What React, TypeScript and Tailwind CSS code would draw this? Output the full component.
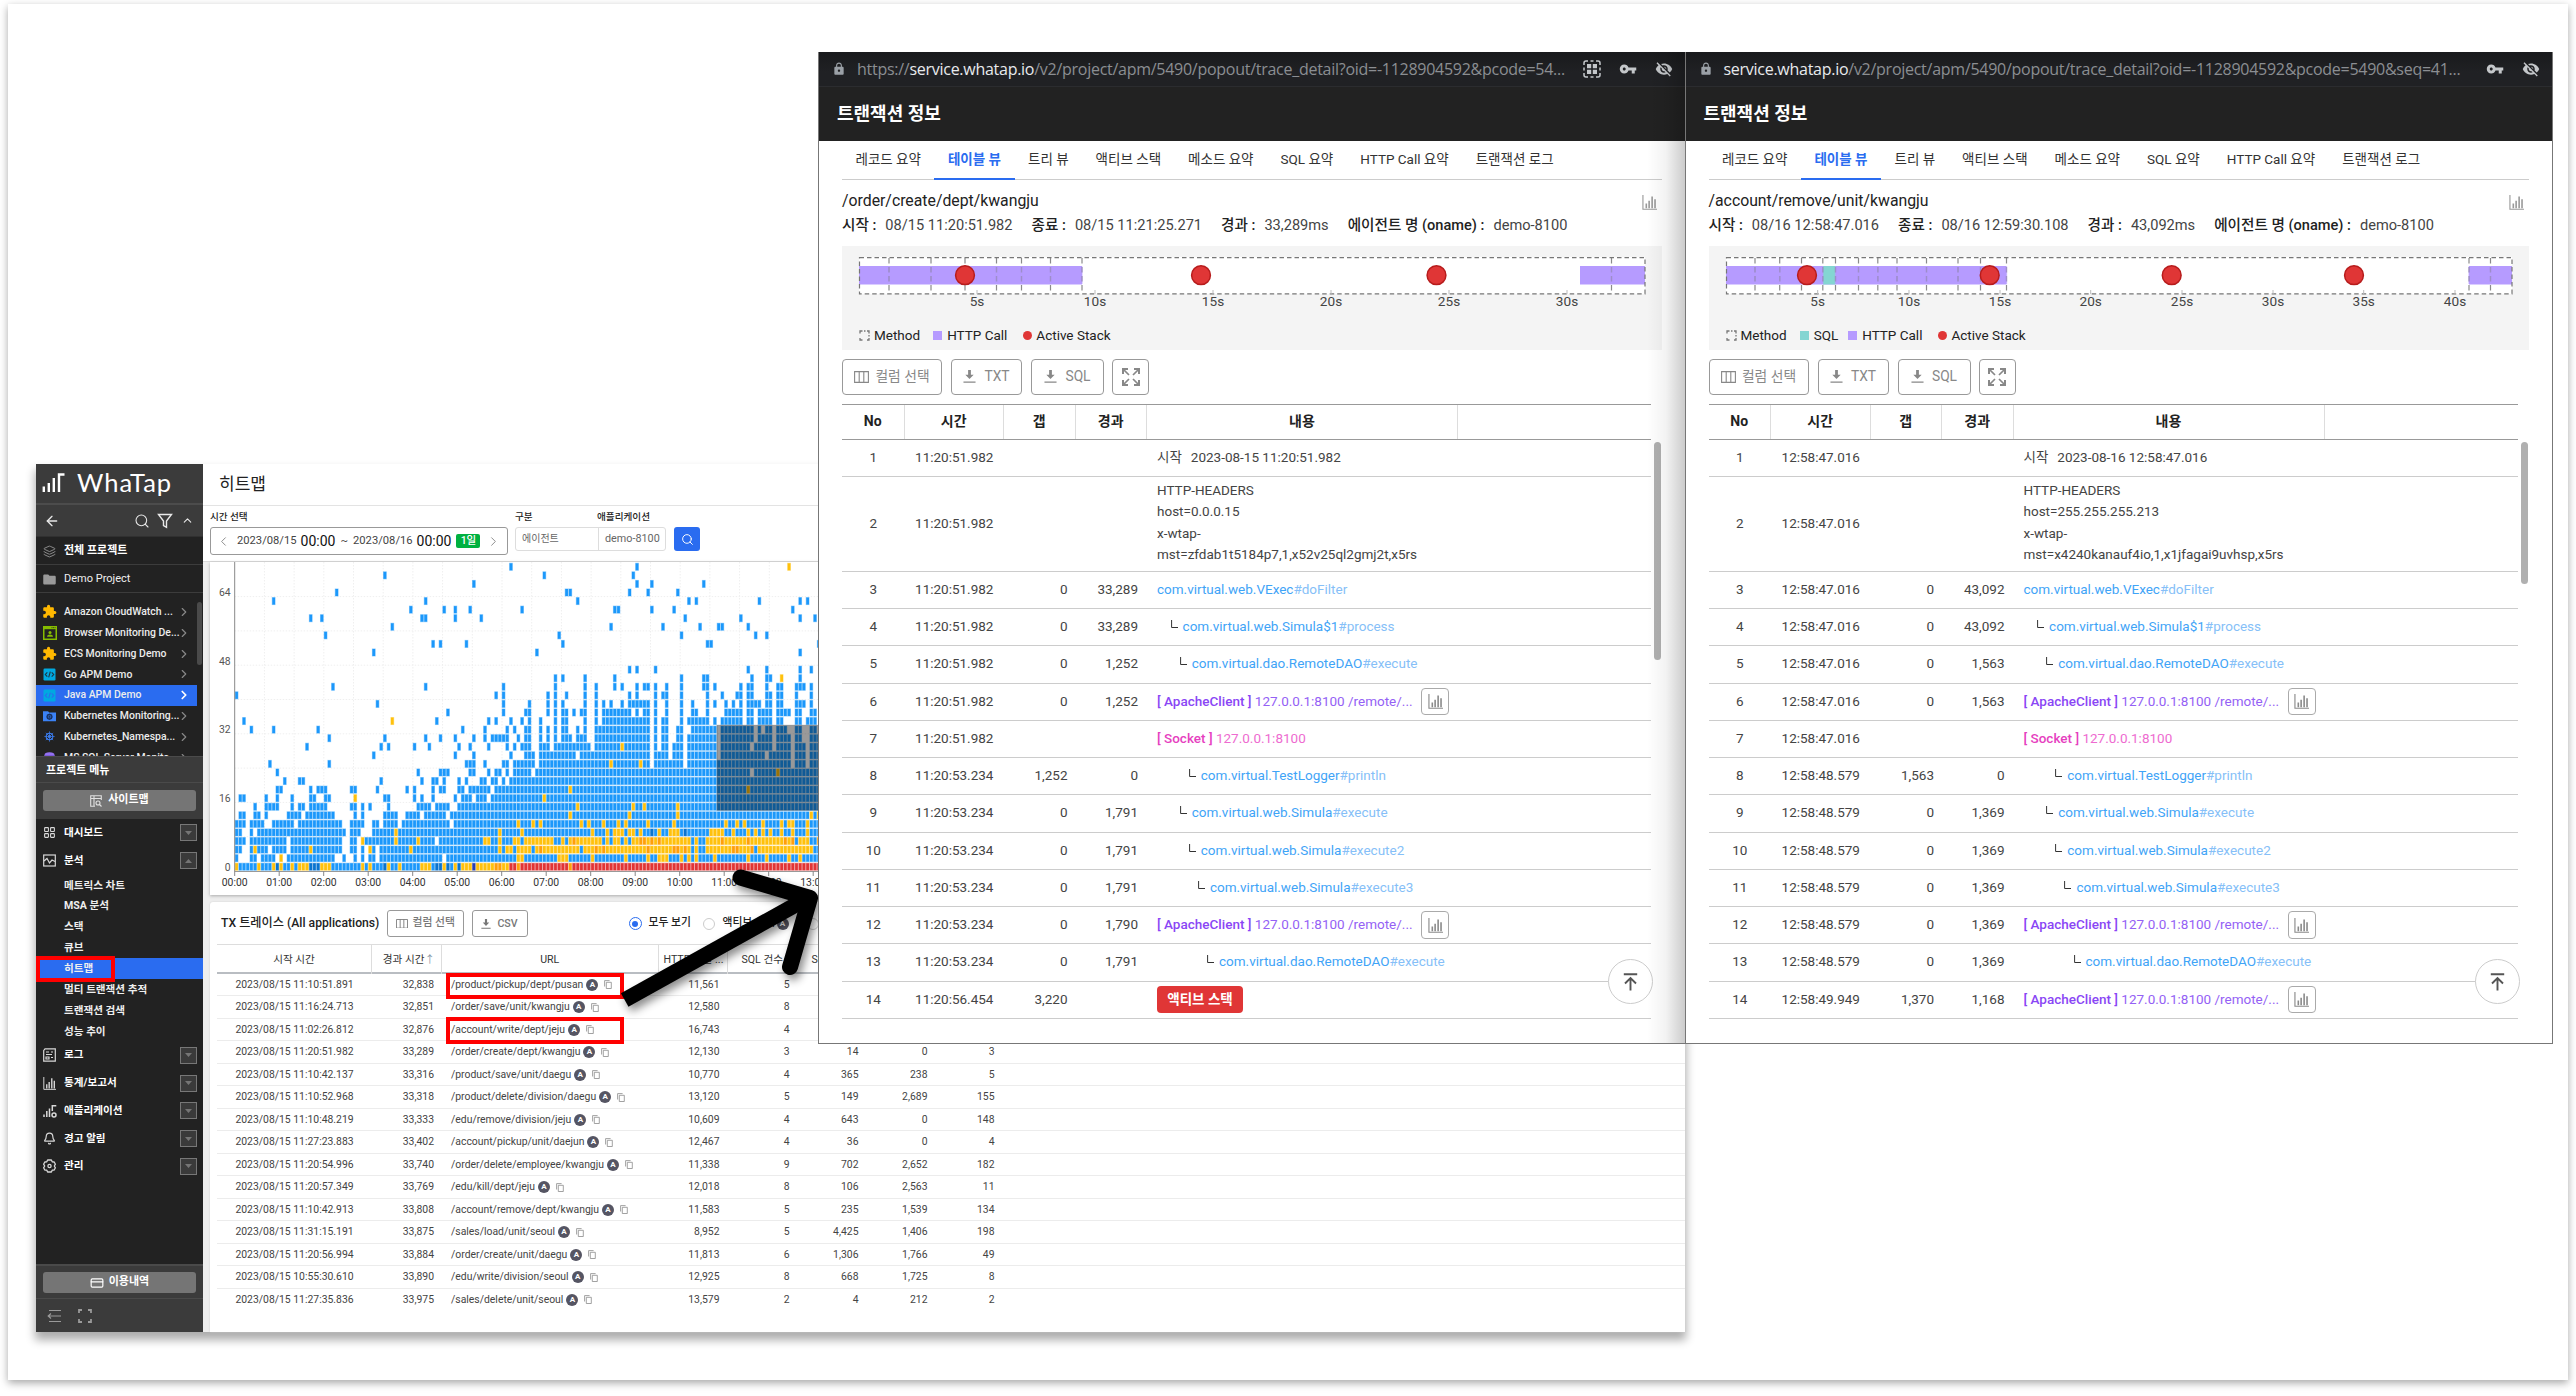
import type { ReactNode } from "react";
import { MdLock, MdVpnKey, MdVisibilityOff, MdFolder, MdExtension } from "react-icons/md";
import {
  ArrowLeft,
  Search,
  ChevronUp,
  ChevronLeft,
  ChevronRight,
  Layers,
  LayoutGrid,
  Bell,
  CreditCard,
} from "lucide-react";

/* ---------- shared icons ---------- */

function BarsIcon({ size, className = "" }: { size: number; className?: string }) {
  return (
    <svg width={size} height={size} viewBox="0 0 16 16" className={className} fill="none" stroke="currentColor">
      <path d="M1 0v15.2h15" strokeWidth="1.2" />
      <path d="M4.6 9v5M7.6 6v8M10.8 1.5v12.5M13.9 4.5V14" strokeWidth="1.7" />
    </svg>
  );
}

function ColumnsIcon({ w, className = "" }: { w: number; className?: string }) {
  return (
    <svg width={w} height={w * 0.8} viewBox="0 0 15 12" className={className} fill="none" stroke="currentColor" strokeWidth="1.1">
      <path d="M.6 .6h13.8v10.8H.6zM5.2 .6v10.8M9.8 .6v10.8" />
    </svg>
  );
}

function DownloadIcon({ size }: { size: number }) {
  return (
    <svg width={size} height={size} viewBox="0 0 13 14" fill="currentColor">
      <path d="M5 0h3v5h3L6.500 9.800 2 5h3zM0 12.400h13v1.300H0z" />
    </svg>
  );
}

function ExpandIcon() {
  return (
    <svg width="18" height="18" viewBox="0 0 18 18" fill="none" stroke="currentColor" strokeWidth="2">
      <path d="M1 6V1h5M12 1h5v5M17 12v5h-5M6 17H1v-5" />
      <path d="M1 1l6 6M17 1l-6 6M17 17l-6-6M1 17l6-6" strokeWidth="1.700" />
    </svg>
  );
}

function CopyIcon() {
  return (
    <svg width="8" height="9" viewBox="0 0 8 9" fill="none" stroke="#8a8a8a" strokeWidth="0.8">
      <path d="M2.300 2.300h5v6.200h-5zM.6 6.500V.6h5" />
    </svg>
  );
}

function AppTile({ faded }: { faded?: boolean }) {
  return (
    <svg width="13" height="13" viewBox="0 0 13 13">
      <rect x=".5" y=".5" width="12" height="12" rx="1.200" fill="#00a9e0" />
      <path
        d="M4.300 4.300L2.300 6.500l2 2.200M8.700 4.300l2 2.200-2 2.200M7.300 3.600L5.700 9.400"
        stroke={faded ? "#2b6cf0" : "#1d3440"}
        strokeWidth="1.100"
        fill="none"
      />
    </svg>
  );
}

function Helm({ color, size }: { color: string; size: number }) {
  return (
    <svg width={size} height={size} viewBox="0 0 12 12" fill="none" stroke={color}>
      <circle cx="6" cy="6" r="3.600" strokeWidth="1.200" />
      <circle cx="6" cy="6" r="1" fill={color} />
      <path d="M6 .4v11.200M.4 6h11.200M2 2l8 8M10 2l-8 8" strokeWidth=".8" />
    </svg>
  );
}

/* ---------- sidebar ---------- */

const projects: { name: string; icon: ReactNode; active?: boolean }[] = [
  { name: "Amazon CloudWatch ...", icon: <MdExtension size={15} color="#ffb800" /> },
  {
    name: "Browser Monitoring De...",
    icon: (
      <svg width="14" height="14" viewBox="0 0 14 14">
        <rect width="14" height="14" fill="#86bc00" />
        <rect x="1.500" y="3.200" width="11" height="9.300" fill="#222" />
        <circle cx="7" cy="6.500" r="1.500" fill="#86bc00" />
        <path d="M4 10.800c0-3 6-3 6 0z" fill="#86bc00" />
        <path d="M8.500 1.600h4" stroke="#222" strokeWidth=".8" strokeDasharray="1 .6" />
      </svg>
    ),
  },
  { name: "ECS Monitoring Demo", icon: <MdExtension size={15} color="#ffb800" /> },
  { name: "Go APM Demo", icon: <AppTile /> },
  { name: "Java APM Demo", icon: <AppTile faded />, active: true },
  {
    name: "Kubernetes Monitoring...",
    icon: (
      <svg width="13" height="12" viewBox="0 0 13 12">
        <path d="M0 1.200h5l1.200 1.400H13v8.600H0z" fill="#3b82f6" />
        <circle cx="6.500" cy="6.800" r="2.400" fill="none" stroke="#17305e" strokeWidth="1.200" />
        <path d="M6.500 3.600v6.400M3.400 6.800h6.200M4.300 4.600l4.400 4.400M8.700 4.600L4.300 9" stroke="#17305e" strokeWidth=".6" />
      </svg>
    ),
  },
  { name: "Kubernetes_Namespa...", icon: <Helm color="#3b7df0" size={11} /> },
  {
    name: "MS SQL Server Monito...",
    icon: (
      <svg width="11" height="12" viewBox="0 0 11 12">
        <ellipse cx="5.500" cy="3" rx="5" ry="2.800" fill="#9370f0" />
        <path d="M.5 3v6c0 3.600 10 3.600 10 0V3z" fill="#7c5ad8" />
      </svg>
    ),
  },
];

const analysis = ["메트릭스 차트", "MSA 분석", "스택", "큐브", "히트맵", "멀티 트랜잭션 추적", "트랜잭션 검색", "성능 추이"];

function MenuRow({ icon, label, open }: { icon: ReactNode; label: string; open?: boolean }) {
  return (
    <div className="flex h-[27.8px] items-center pr-[6px] pl-[7px] text-[10.600px] font-bold text-white">
      <span className="flex w-[21px] text-[#d8d8d8]">{icon}</span>
      <span className="flex-1">{label}</span>
      <span className="flex h-[17px] w-[17px] items-center justify-center border border-[#777] bg-[#3a3a3a]">
        <svg width="7" height="4" viewBox="0 0 7 4" fill="#757575">
          <path d={open ? "M0 4L3.500 0 7 4z" : "M0 0h7L3.500 4z"} />
        </svg>
      </span>
    </div>
  );
}

function Sidebar() {
  return (
    <aside className="flex h-full w-[167px] shrink-0 flex-col bg-[#222]">
      <div className="flex h-[41px] items-center border-b-2 border-[#4c4c4c] bg-[#3b3b3b] pb-[2px] pl-[6px]">
        <svg width="24" height="20" viewBox="0 0 24 20" fill="none" stroke="#fff" strokeWidth="2.400">
          <path d="M1.800 13.500V19M6.800 10v9M11.800 5v14" />
          <path d="M17 19V1.500h5.500" />
        </svg>
        <span className="ml-[11px] text-[25.500px] leading-none tracking-[1px] text-white [font-family:Lato,sans-serif]">WhaTap</span>
      </div>
      <div className="flex h-[32px] items-center border-b border-[#303030] bg-[#3b3b3b] pr-[9px] pl-[8px] text-[#e8e8e8]">
        <ArrowLeft size={16} strokeWidth={2} />
        <span className="flex-1" />
        <Search size={16} strokeWidth={1.600} />
        <svg width="16" height="16" viewBox="0 0 16 16" className="ml-[7px]" fill="none" stroke="currentColor" strokeWidth="1.400">
          <path d="M1.500 1.500h13L9.500 8v6.300L6.500 12.500V8z" />
        </svg>
        <ChevronUp size={13} strokeWidth={2} className="ml-[8px]" />
      </div>
      <div className="flex h-[28px] items-center border-b border-[#3c3c3c] pt-[2px] pl-[7px] text-[11px] font-bold text-white">
        <Layers size={13} strokeWidth={1.500} className="mr-[8px] text-[#a0a0a0]" />
        전체 프로젝트
      </div>
      <div className="flex h-[28px] items-center border-b border-[#3c3c3c] pt-[2px] pl-[6px] text-[11px] text-[#f0f0f0]">
        <MdFolder size={15} className="mr-[7px] text-[#999]" />
        Demo Project
      </div>
      <div className="relative h-[163px] overflow-hidden pt-[8.500px]">
        {projects.map((p) => (
          <div
            key={p.name}
            className={`mr-[6px] flex h-[20.850px] items-center pl-[6px] text-[10.450px] font-medium text-[#ececec] ${p.active ? "bg-[#2a6cf0]" : ""}`}
          >
            <span className="flex w-[15px] justify-center">{p.icon}</span>
            <span className="ml-[7px] w-[113px] whitespace-nowrap">{p.name}</span>
            <ChevronRight size={14} strokeWidth={p.active ? 3 : 2} className={`shrink-0 ${p.active ? "text-white" : "text-[#888]"}`} />
          </div>
        ))}
        <div className="absolute top-[9px] right-[1px] h-[63px] w-[5px] rounded-full bg-[#4a4a4a]" />
      </div>
      <div className="h-[27px] border-t border-b border-[#4a4a4a] bg-[#3b3b3b] pl-[10px] text-[11px] leading-[28px] font-bold text-white">
        프로젝트 메뉴
      </div>
      <div className="h-[36px] bg-[#3b3b3b] px-[7px] pt-[7px]">
        <div className="flex h-[21px] items-center justify-center gap-[6px] rounded-[3px] bg-[#757575] text-[11px] font-bold text-white">
          <svg width="12" height="12" viewBox="0 0 12 12" fill="none" stroke="#e0e0e0" strokeWidth="1.100">
            <path d="M11.300 5V.7H.7v10.600H5M.7 3.500h10.600M4 .7v10.600" />
            <circle cx="8" cy="8" r="2" />
            <path d="M9.500 9.500l2 2" />
          </svg>
          사이트맵
        </div>
      </div>
      <MenuRow icon={<LayoutGrid size={13} strokeWidth={2} />} label="대시보드" />
      <MenuRow
        open
        label="분석"
        icon={
          <svg width="13" height="13" viewBox="0 0 13 13" fill="none" stroke="currentColor" strokeWidth="1.200">
            <rect x=".7" y="1" width="11.600" height="11" />
            <path d="M1 7l3-2.500L6.500 9 9 6l3 1.500" />
          </svg>
        }
      />
      {analysis.map((a) => (
        <div
          key={a}
          className={`h-[20.850px] shrink-0 pl-[28px] text-[10.600px] leading-[21.500px] font-bold text-[#eee] ${a === "히트맵" ? "bg-[#2a6cf0]" : ""}`}
        >
          {a}
        </div>
      ))}
      <MenuRow
        label="로그"
        icon={
          <svg width="13" height="14" viewBox="0 0 13 14" fill="none" stroke="currentColor" strokeWidth="1.200">
            <path d="M.7 2.500L2 .8h10.300v12.400H.7zM3 4h3M8 4h2M3 6.500h6M3 9h3v2H3zM8 9.500h2" />
          </svg>
        }
      />
      <MenuRow icon={<BarsIcon size={13} />} label="통계/보고서" />
      <MenuRow
        label="애플리케이션"
        icon={
          <svg width="14" height="14" viewBox="0 0 14 14" fill="none" stroke="currentColor" strokeWidth="1.500">
            <path d="M1 10.500V13M3.800 7v6M6.500 4.500V13M9.300 7V1.800h4" />
            <circle cx="11" cy="11" r="2" />
          </svg>
        }
      />
      <MenuRow icon={<Bell size={13} strokeWidth={2.200} />} label="경고 알림" />
      <MenuRow
        label="관리"
        icon={
          <svg width="13" height="14" viewBox="0 0 13 14" fill="none" stroke="currentColor" strokeWidth="1.300" strokeLinejoin="round">
            <path d="M4.600 1h3.800l.8 1.800 2 .2 1.200 2.200L11.300 7l1.100 1.800-1.200 2.200-2 .2-.8 1.800H4.600l-.8-1.800-2-.2L.6 8.800 1.700 7 .6 5.200 1.800 3l2-.2z" />
            <circle cx="6.500" cy="7" r="1.600" />
          </svg>
        }
      />
      <div className="flex-1" />
      <div className="h-[35px] border-t-2 border-b border-[#4a4a4a] bg-[#3b3b3b] px-[7px] pt-[6px]">
        <div className="flex h-[21px] items-center justify-center gap-[5px] rounded-[3px] bg-[#757575] text-[11px] font-bold text-white">
          <CreditCard size={14} strokeWidth={2} />
          이용내역
        </div>
      </div>
      <div className="flex h-[33px] items-center gap-[17px] bg-[#3b3b3b] pl-[11px] text-[#9a9a9a]">
        <svg width="14" height="14" viewBox="0 0 14 14" fill="none" stroke="currentColor" strokeWidth="1.200">
          <path d="M2 1.500h12M1 7h13M2 12.500h12M4 4.500L1.200 7 4 9.500" />
        </svg>
        <svg width="14" height="14" viewBox="0 0 14 14" fill="none" stroke="currentColor" strokeWidth="1.800">
          <path d="M1 4V1h3M10 1h3v3M13 10v3h-3M4 13H1v-3" />
        </svg>
      </div>
    </aside>
  );
}

/* ---------- heat map ---------- */

// One entry per 2-second band, lowest band first. Each token is a five-minute
// column or a range of columns; a leading letter sets the colour
// (y yellow, o orange, r red, d deep blue, n navy), none means blue.
// Later tokens are painted over earlier ones.
const bands: string[] = [
  "0-73 y0 y6 y10 d11 y12 y15 y17-19 d20-22 y23-25 y34 y36 d40 y41 y44 y50-52 d54-55 y56 d57 y59 d60 y61-63 n64 y65-69 o70-71 y72-73 r74-75 o76 r77-157 o90",
  "0 4-5 7-10 y12 14-26 29 32 34 36-37 39-55 57-157 y76-77 y87-89 y96 y105 y111 y114-116 y120 y122 y124 y129 y138 y143 y149 y152",
  "0-1 4 y5 6-8 10-13 15-28 y20 31-32 34 y36 37 39-157 y47 y71 y73-74 y76-79 y81 o82 y83-92 y94-96 o97 y98 o99 y100-110 o111 y112-117 o118-119 y120 o121 y122 y124 y127-133 o134-135 y136-138 o139 y141-155",
  "0-2 4-13 15-28 31-32 y34 35-53 y43 y49 55-157 y67-68 y71 y75-76 y78-85 y88 y90 o91 y92-98 y100 y102-103 y105 y107-108 o109-110 y111 o112 y113 o114 y115-122 y124 y127-150 o131 o138 o148 o150 y152-154 o157",
  "0-1 4 6-29 31-33 37-157 y43 y71 y77 y96 y100 y102-104 y106-107 y109 d112 y114 y117-119 d121 y128-131 y134 y138 y140 y142 y144 y147 y150 y154",
  "0-2 4-7 10-15 17-28 31-34 37-38 40-43 45-57 59-157 y76 y80 y82 y93 y95 y99 y103 y105 y111 y118 y132 y135 y137 y142 y147 y149-150 y154",
  "1-2 5-6 8 14-17 19-26 32 34 40-43 46-49 51-56 58-156 y90 y106 y119 y155 y157",
  "5 8-11 15 17-18 20-24 31-32 34 36 41 49-52 54-57 60-157 y92 y107 y110 y119",
  "1-2 8 11 15 20-21 24-25 y32 40-41 48 50 53 59 61-63 65-67 69-157 y83",
  "11-12 20 22-24 31-32 38 46 48 53 55-56 60-61 63-68 70-157 y90 y138",
  "13 17-18 39 50 53-54 56 60 62 66-67 69-70 72 74-157",
  "11 49 55-57 63-64 68 70-71 73 75-79 81-138 140-157 y146",
  "9 25 62-64 67 72-73 75-80 82-111 y101 y109 113-120 122-149 151-153 155-157",
  "37 59 64 74 78-80 82-91 93-111 113-116 118-120 122-129 131-142 144-149 151-153 155-157",
  "19 39 41 48 52 60 63 68 73 75 77-79 82-84 86-95 97-111 y104 113 115-116 118-120 122-129 131-138 140-144 146-149 151-153 155-157",
  "25 40 51 55 59 64 67 69-73 76 78-79 82 84 86 88-90 92-94 97-111 113 115-116 119-120 122-129 131-139 141-144 146-149 151-152 155-157",
  "4 10 22 61 67 73 75 78-79 82 84 86 88-89 92 94 97-111 113 115-116 119-120 123-129 131-139 141 143-144 146-148 151-152 155-156",
  "2 y42 54 68 70 74 77 79 82 86 88-89 94 97 99-111 113 115-116 120 122-127 129 131-136 138-139 141-144 146-147 151-152 154-156",
  "57 72 78-79 84 86 88-89 91 93-94 97 99-106 108 110-111 113 116 120 123-124 127 132-136 138-139 141-144 146-149 151-152 155-156",
  "38 72 79 84 86 88 94 97 99 101 104 106-111 113 116 120 123 127 129 132 134 136 138-141 143-144 146-147 151-153 155",
  "0 70 72 84 86 89 94 97 106 108 113 115-116 120 127 131 135-136 138-139 143-144 146-147 151 155",
  "26 51 72 86 94 97 102 104 108 110-111 113 116 120 126-127 129 136 138-139 143 146-147 151-153 155",
  "86 88 94 102 120 126-127 139 143-144 y147 152",
  "106 108 113 138 143 152 155",
  "",
  "37 81 152",
  "53 55 62 88 127-128 157",
  "24 87 120 140 143",
  "42 101 115 125 130-131 138",
  "20 23 50-51 59 66 121 136 152 156",
  "47 56 59 63 77 102-103 112 118 150",
  "10 51 92 122 124 141 152 154",
  "27 89-90 106 111 119",
  "64 108 112 126",
  "40 83 107",
  "74 108 y149",
];

const inks: Record<string, string> = {
  b: "#1c98fb",
  y: "#ffc10d",
  o: "#ff9f0a",
  r: "#e23535",
  d: "#0a74cf",
  n: "#2c3fb0",
};

function paint(band: string): Map<number, string> {
  const cells = new Map<number, string>();
  band
    .split(" ")
    .filter(Boolean)
    .forEach((token) => {
      const lettered = /[a-z]/.test(token[0]);
      const ink = lettered ? token[0] : "b";
      const [from, to] = (lettered ? token.slice(1) : token).split("-").map(Number);
      for (let c = from; c <= (to ?? from); c++) cells.set(c, ink);
    });
  return cells;
}

function HeatMap() {
  const x0 = 24.700;
  const base = 309;
  const cw = 3.708;
  const rh = 8.570;
  const hours = Array.from({ length: 14 }, (_, i) => i);
  return (
    <svg width="620" height="332" viewBox="0 0 620 332" className="block">
      {Array.from({ length: 18 }, (_, i) => (
        <path key={i} d={`M${x0 + 29.700 * (i + 1)} 0V${base}`} stroke="#efefef" strokeDasharray="1.500 1.500" />
      ))}
      {Array.from({ length: 8 }, (_, i) => (
        <path key={i} d={`M${x0} ${base - 34.300 * (i + 1)}H620`} stroke="#efefef" strokeDasharray="1.500 1.500" />
      ))}
      {bands.map((band, r) =>
        [...paint(band)].map(([c, ink]) => (
          <rect
            key={`${r}-${c}`}
            x={x0 + c * cw + 0.500}
            y={base - (r + 1) * rh + 0.800}
            width={2.750}
            height={7}
            fill={inks[ink]}
            stroke={inks[ink]}
            strokeOpacity={0.450}
          />
        )),
      )}
      <rect x="507" y="163.300" width="113" height="85" fill="#000" fillOpacity=".4" stroke="#555" strokeOpacity=".4" />
      <path d={`M${x0} 0V${base}`} stroke="#888" />
      <path d={`M${x0} ${base + 0.500}H620`} stroke="#999" />
      {hours.map((h) => (
        <g key={h}>
          <path d={`M${x0 + h * 44.500} ${base}v5`} stroke="#888" />
          <text x={x0 + h * 44.500} y="323.500" textAnchor="middle" fontSize="10.400" fill="#333">
            {String(h).padStart(2, "0")}:00
          </text>
        </g>
      ))}
      {[0, 16, 32, 48, 64].map((v) => (
        <text key={v} x="20.700" y={308.600 - v * 4.290} textAnchor="end" fontSize="10.400" fill="#555">
          {v}
        </text>
      ))}
    </svg>
  );
}

/* ---------- trace list ---------- */

const traces: [string, string, string, string, string, string, string, string][] = [
  ["11:10:51.891", "32,838", "/product/pickup/dept/pusan", "11,561", "5", "", "", ""],
  ["11:16:24.713", "32,851", "/order/save/unit/kwangju", "12,580", "8", "", "", ""],
  ["11:02:26.812", "32,876", "/account/write/dept/jeju", "16,743", "4", "", "", ""],
  ["11:20:51.982", "33,289", "/order/create/dept/kwangju", "12,130", "3", "14", "0", "3"],
  ["11:10:42.137", "33,316", "/product/save/unit/daegu", "10,770", "4", "365", "238", "5"],
  ["11:10:52.968", "33,318", "/product/delete/division/daegu", "13,120", "5", "149", "2,689", "155"],
  ["11:10:48.219", "33,333", "/edu/remove/division/jeju", "10,609", "4", "643", "0", "148"],
  ["11:27:23.883", "33,402", "/account/pickup/unit/daejun", "12,467", "4", "36", "0", "4"],
  ["11:20:54.996", "33,740", "/order/delete/employee/kwangju", "11,338", "9", "702", "2,652", "182"],
  ["11:20:57.349", "33,769", "/edu/kill/dept/jeju", "12,018", "8", "106", "2,563", "11"],
  ["11:10:42.913", "33,808", "/account/remove/dept/kwangju", "11,583", "5", "235", "1,539", "134"],
  ["11:31:15.191", "33,875", "/sales/load/unit/seoul", "8,952", "5", "4,425", "1,406", "198"],
  ["11:20:56.994", "33,884", "/order/create/unit/daegu", "11,813", "6", "1,306", "1,766", "49"],
  ["10:55:30.610", "33,890", "/edu/write/division/seoul", "12,925", "8", "668", "1,725", "8"],
  ["11:27:35.836", "33,975", "/sales/delete/unit/seoul", "13,579", "2", "4", "212", "2"],
];

const traceGrid = "grid grid-cols-[155px_70px_216.500px_69px_70px_69px_69px_67px_1fr]";

function Badge() {
  return (
    <span className="flex h-[12px] w-[12px] items-center justify-center rounded-full bg-[#555563] text-[8px] leading-none font-bold text-white">
      A
    </span>
  );
}

function TraceCard() {
  return (
    <section className="mt-[7px] ml-[7px] flex-1 rounded-tl-[3px] bg-white pl-[7px] shadow-[0_0_2px_#ccc]">
      <div className="flex h-[42px] items-center pt-[1px] pl-[4px]">
        <h2 className="w-[166px] text-[12.200px] font-medium whitespace-nowrap text-[#222]">TX 트레이스 (All applications)</h2>
        <button className="flex h-[27.500px] w-[76.500px] items-center justify-center gap-[5px] rounded-[3px] border border-[#999] text-[10.800px] font-medium text-[#777]">
          <ColumnsIcon w={12} />
          컬럼 선택
        </button>
        <button className="ml-[8px] flex h-[27.500px] w-[56px] items-center justify-center gap-[6px] rounded-[3px] border border-[#999] text-[10.600px] font-medium text-[#777]">
          <DownloadIcon size={10} />
          CSV
        </button>
        <div className="ml-[101px] flex items-center text-[10.800px] font-medium text-[#222]">
          <span className="flex h-[13px] w-[13px] items-center justify-center rounded-full border border-[#2a6cf0]">
            <span className="h-[6px] w-[6px] rounded-full bg-[#2a6cf0]" />
          </span>
          <span className="ml-[7px] w-[54px]">모두 보기</span>
          <span className="h-[12px] w-[12px] rounded-full border border-[#ccc]" />
          <span className="ml-[8px] w-[54px] whitespace-nowrap">액티브 스택</span>
          <Badge />
          <span className="ml-[18px] h-[12px] w-[12px] rounded-full border border-[#ccc]" />
        </div>
      </div>
      <div className={`${traceGrid} h-[29.500px] border-t border-b-2 border-[#ddd] border-b-[#b9bdc2] text-[10.600px] leading-[29px] text-[#333]`}>
        <span className="border-r border-[#ddd] text-center">시작 시간</span>
        <span className="border-r border-[#ddd] pr-[6px] text-right whitespace-nowrap">
          경과 시간<span className="text-[#8899aa]">↑</span>
        </span>
        <span className="border-r border-[#ddd] text-center">URL</span>
        <span className="overflow-hidden border-r border-[#ddd] pl-[5px] whitespace-nowrap">HTTP 호출 ...</span>
        <span className="pl-[14px]">SQL 건수</span>
        <span className="pl-[14px]">SQL 시간</span>
      </div>
      {traces.map((t) => (
        <div key={t[0]} className={`${traceGrid} h-[22.530px] border-b border-[#ececec] text-[10.400px] leading-[22px] text-[#444] last:border-b-0`}>
          <span className="text-center">2023/08/15 {t[0]}</span>
          <span className="pr-[8px] text-right">{t[1]}</span>
          <span className="flex items-center pl-[9px]">
            {t[2]}
            <span className="mr-[6px] ml-[3px]">
              <Badge />
            </span>
            <CopyIcon />
          </span>
          <span className="pr-[8px] text-right">{t[3]}</span>
          <span className="pr-[8px] text-right">{t[4]}</span>
          <span className="pr-[8px] text-right">{t[5]}</span>
          <span className="pr-[8px] text-right">{t[6]}</span>
          <span className="pr-[8px] text-right">{t[7]}</span>
        </div>
      ))}
    </section>
  );
}

function MainWindow() {
  return (
    <div className="absolute top-[464px] left-[36px] flex h-[868px] w-[1649px] bg-[#eeeeee] shadow-[0_7px_9px_1px_rgba(0,0,0,0.33)]">
      <Sidebar />
      <main className="flex min-w-0 flex-1 flex-col">
        <header className="h-[42px] border-b border-[#e3e3e3] bg-white pl-[16px] text-[17px] leading-[40px] text-[#222]">히트맵</header>
        <div className="flex h-[56px] border-b border-[#d8d8d8] bg-white pt-[4px] pl-[7px] text-[9.600px] text-[#222]">
          <div className="w-[305px]">
            <div className="h-[17px] leading-[14px] font-medium">시간 선택</div>
            <div className="flex h-[28px] w-[298px] items-center rounded-[3px] border border-[#999] text-[11.200px] text-[#444]">
              <ChevronLeft size={15} strokeWidth={1.500} className="ml-[5px] text-[#888]" />
              <span className="ml-[6px]">2023/08/15</span>
              <span className="ml-[4px] text-[14px] text-[#111]">00:00</span>
              <span className="mx-[5px]">~</span>
              <span>2023/08/16</span>
              <span className="ml-[4px] text-[14px] text-[#111]">00:00</span>
              <span className="ml-[5px] h-[14px] w-[24px] rounded-[2px] bg-[#00b140] text-center text-[10.500px] leading-[14px] font-medium text-white">1일</span>
              <ChevronRight size={15} strokeWidth={1.500} className="ml-[6px] text-[#888]" />
            </div>
          </div>
          <div>
            <div className="flex h-[17px] leading-[14px] font-medium">
              <span className="w-[82px]">구분</span>
              <span>애플리케이션</span>
            </div>
            <div className="flex h-[24px] w-[151px] items-center rounded-[3px] border border-[#ddd] text-[#666]">
              <span className="w-[83px] border-r border-[#ddd] pl-[6px] text-[10px] leading-[22px]">에이전트</span>
              <span className="pl-[6px] text-[10.800px]">demo-8100</span>
            </div>
          </div>
          <div className="mt-[17px] ml-[8px] flex h-[24px] w-[26px] items-center justify-center rounded-[3px] bg-[#2a6cf0] text-white">
            <Search size={13} strokeWidth={1.800} />
          </div>
        </div>
        <section className="ml-[7px] h-[333px] bg-white shadow-[0_1px_3px_#aaa]">
          <HeatMap />
        </section>
        <TraceCard />
      </main>
      <div className="absolute top-[492px] left-0 h-[26px] w-[79px] border-4 border-[#ff0000]" />
      <div className="absolute top-[509px] left-[410px] h-[26px] w-[178px] border-4 border-[#ff0000]" />
      <div className="absolute top-[553px] left-[410px] h-[27px] w-[178px] border-4 border-[#ff0000]" />
    </div>
  );
}

/* ---------- transaction pop-outs ---------- */

type Step = {
  time: string;
  gap?: string;
  took?: string;
  depth?: number;
  call?: [string, string];
  apache?: boolean;
  socket?: boolean;
  note?: string;
  lines?: string[];
};

type Trace = {
  scheme?: string;
  rest: string;
  grid?: boolean;
  path: string;
  start: string;
  end: string;
  took: string;
  sql?: boolean;
  ticks: number[];
  cuts: number[];
  bars: [number, number, string][];
  dots: number[];
  steps: Step[];
  thumb: string;
};

const first: Trace = {
  scheme: "https://",
  rest: "/v2/project/apm/5490/popout/trace_detail?oid=-1128904592&pcode=54...",
  grid: true,
  path: "/order/create/dept/kwangju",
  start: "08/15 11:20:51.982",
  end: "08/15 11:21:25.271",
  took: "33,289ms",
  ticks: [118, 236, 354, 472, 590, 708],
  cuts: [30, 72, 106, 137.5, 162.5, 191.5, 223, 752.5],
  bars: [
    [0, 223, "#b69bff"],
    [721, 65, "#b69bff"],
  ],
  dots: [106, 342, 577.5],
  thumb: "h-[218px]",
  steps: [
    { time: "11:20:51.982", note: "2023-08-15 11:20:51.982" },
    { time: "11:20:51.982", lines: ["HTTP-HEADERS", "host=0.0.0.15", "x-wtap-", "mst=zfdab1t5184p7,1,x52v25ql2gmj2t,x5rs"] },
    { time: "11:20:51.982", gap: "0", took: "33,289", depth: 0, call: ["com.virtual.web.VExec", "#doFilter"] },
    { time: "11:20:51.982", gap: "0", took: "33,289", depth: 1, call: ["com.virtual.web.Simula$1", "#process"] },
    { time: "11:20:51.982", gap: "0", took: "1,252", depth: 2, call: ["com.virtual.dao.RemoteDAO", "#execute"] },
    { time: "11:20:51.982", gap: "0", took: "1,252", apache: true },
    { time: "11:20:51.982", socket: true },
    { time: "11:20:53.234", gap: "1,252", took: "0", depth: 3, call: ["com.virtual.TestLogger", "#println"] },
    { time: "11:20:53.234", gap: "0", took: "1,791", depth: 2, call: ["com.virtual.web.Simula", "#execute"] },
    { time: "11:20:53.234", gap: "0", took: "1,791", depth: 3, call: ["com.virtual.web.Simula", "#execute2"] },
    { time: "11:20:53.234", gap: "0", took: "1,791", depth: 4, call: ["com.virtual.web.Simula", "#execute3"] },
    { time: "11:20:53.234", gap: "0", took: "1,790", apache: true },
    { time: "11:20:53.234", gap: "0", took: "1,791", depth: 5, call: ["com.virtual.dao.RemoteDAO", "#execute"] },
    { time: "11:20:56.454", gap: "3,220" },
  ],
};

const second: Trace = {
  rest: "/v2/project/apm/5490/popout/trace_detail?oid=-1128904592&pcode=5490&seq=41...",
  path: "/account/remove/unit/kwangju",
  start: "08/16 12:58:47.016",
  end: "08/16 12:59:30.108",
  took: "43,092ms",
  sql: true,
  ticks: [91.700, 183, 274, 364.700, 456, 547, 637.700, 729],
  cuts: [29, 53.700, 75.500, 96.800, 109.500, 132.500, 151.800, 171, 200.500, 232, 254.500, 280.500, 743, 764.500],
  bars: [
    [0, 280.500, "#b69bff"],
    [97, 12.500, "#84d5d2"],
    [743, 43, "#b69bff"],
  ],
  dots: [81, 263.700, 445.700, 628],
  thumb: "h-[142px]",
  steps: [
    { time: "12:58:47.016", note: "2023-08-16 12:58:47.016" },
    { time: "12:58:47.016", lines: ["HTTP-HEADERS", "host=255.255.255.213", "x-wtap-", "mst=x4240kanauf4io,1,x1jfagai9uvhsp,x5rs"] },
    { time: "12:58:47.016", gap: "0", took: "43,092", depth: 0, call: ["com.virtual.web.VExec", "#doFilter"] },
    { time: "12:58:47.016", gap: "0", took: "43,092", depth: 1, call: ["com.virtual.web.Simula$1", "#process"] },
    { time: "12:58:47.016", gap: "0", took: "1,563", depth: 2, call: ["com.virtual.dao.RemoteDAO", "#execute"] },
    { time: "12:58:47.016", gap: "0", took: "1,563", apache: true },
    { time: "12:58:47.016", socket: true },
    { time: "12:58:48.579", gap: "1,563", took: "0", depth: 3, call: ["com.virtual.TestLogger", "#println"] },
    { time: "12:58:48.579", gap: "0", took: "1,369", depth: 2, call: ["com.virtual.web.Simula", "#execute"] },
    { time: "12:58:48.579", gap: "0", took: "1,369", depth: 3, call: ["com.virtual.web.Simula", "#execute2"] },
    { time: "12:58:48.579", gap: "0", took: "1,369", depth: 4, call: ["com.virtual.web.Simula", "#execute3"] },
    { time: "12:58:48.579", gap: "0", took: "1,369", apache: true },
    { time: "12:58:48.579", gap: "0", took: "1,369", depth: 5, call: ["com.virtual.dao.RemoteDAO", "#execute"] },
    { time: "12:58:49.949", gap: "1,370", took: "1,168", apache: true },
  ],
};

const tabs = ["레코드 요약", "테이블 뷰", "트리 뷰", "액티브 스택", "메소드 요약", "SQL 요약", "HTTP Call 요약", "트랜잭션 로그"];

function Timeline({ t }: { t: Trace }) {
  return (
    <svg width="820" height="66" viewBox="-17 -11 820 66" className="block">
      <rect x="0" y="0" width="786" height="37" fill="#fff" />
      {t.bars.map(([x, w, fill]) => (
        <rect key={x} x={x} y="9" width={w} height="18.500" fill={fill} />
      ))}
      <g stroke="#777" strokeWidth="1.200" strokeDasharray="4.500 3" fill="none">
        <rect x=".5" y=".6" width="785.500" height="36.200" />
        {t.cuts.map((c) => (
          <path key={c} d={`M${c} 1V37`} strokeDasharray="5.500 3.500" strokeOpacity=".85" />
        ))}
      </g>
      {t.cuts.map((c) => (
        <path key={c} d={`M${c} 9.500v17.500`} stroke="#b69bff" strokeWidth="1.400" strokeOpacity=".55" />
      ))}
      {t.ticks.map((x, i) => (
        <g key={x}>
          <path d={`M${x} 33v4`} stroke="#bbb" />
          <text x={x} y="49" textAnchor="middle" fontSize="13.600" fill="#444">
            {(i + 1) * 5}s
          </text>
        </g>
      ))}
      {t.dots.map((x) => (
        <circle key={x} cx={x} cy="18.200" r="9.400" fill="#e03636" stroke="#b71c1c" strokeWidth="1.500" />
      ))}
    </svg>
  );
}

const stepGrid = "grid grid-cols-[62.500px_99.500px_71.500px_71.500px_1fr]";

function Content({ s }: { s: Step }) {
  if (s.note)
    return (
      <span>
        시작<span className="ml-[9px]">{s.note}</span>
      </span>
    );
  if (s.lines)
    return (
      <span className="flex flex-col leading-[21.300px]">
        {s.lines.map((l) => (
          <span key={l}>{l}</span>
        ))}
      </span>
    );
  if (s.call)
    return (
      <span className="flex items-center text-[#3fa4f7]">
        {s.depth ? (
          <svg width="7" height="9" viewBox="0 0 7 9" className="mt-[-3px] mr-[5px]" style={{ marginLeft: 4.500 + s.depth * 9.100 }} fill="none" stroke="#333">
            <path d="M.6 0v7.500H7" />
          </svg>
        ) : null}
        {s.call[0]}
        <span className="text-[#86bff8]">{s.call[1]}</span>
      </span>
    );
  if (s.apache)
    return (
      <span className="flex items-center text-[#9461f5]">
        <span className="w-[264px] whitespace-nowrap">
          <b className="font-medium text-[#8a46f5]">[ ApacheClient ]</b> 127.0.0.1:8100 /remote/...
        </span>
        <span className="mt-[2px] flex h-[27.500px] w-[28px] items-center justify-center rounded-[4px] border border-[#aaa] text-[#8a8a8a]">
          <BarsIcon size={15} />
        </span>
      </span>
    );
  if (s.socket)
    return (
      <span className="text-[#ee6bd0]">
        <b className="font-medium text-[#e63fc0]">[ Socket ]</b> 127.0.0.1:8100
      </span>
    );
  return <span className="mt-[2px] flex h-[27px] w-[86px] items-center justify-center rounded-[4px] bg-[#e03636] pb-[1px] text-[13.500px] font-bold text-white">액티브 스택</span>;
}

function Popup({ t, className }: { t: Trace; className: string }) {
  const button = "flex h-[36px] items-center justify-center rounded-[4px] border border-[#999] pb-[1px] text-[13.800px] text-[#888]";
  return (
    <div className={`absolute top-[52px] h-[992px] w-[868px] border-r border-b border-l border-[#777] bg-white ${className}`}>
      <div className="flex h-[34px] items-center bg-gradient-to-b from-[#191a1c] to-[#202124] to-60% pr-[12px] pl-[13px] text-[#c4c7ca]">
        <MdLock size={14} className="text-[#9aa0a6]" />
        <span className="ml-[11px] flex-1 text-[16px] tracking-[-0.270px] whitespace-nowrap text-[#8b8e92] [font-family:'Open_Sans','Noto_Sans',sans-serif]">
          {t.scheme}
          <span className="text-[#e8eaed]">service.whatap.io</span>
          {t.rest}
        </span>
        {t.grid && (
          <svg width="18" height="18" viewBox="0 0 18 18" fill="none" stroke="currentColor" strokeWidth="1.500">
            <path d="M1 5V3a2 2 0 012-2h2M7.500 1h3M13 1h2a2 2 0 012 2v2M17 7.500v3M17 13v2a2 2 0 01-2 2h-2M10.500 17h-3M5 17H3a2 2 0 01-2-2v-2M1 10.500v-3" />
            <path d="M4 4h4.200v4.200H4zM9.800 4H14v4.200H9.800zM4 9.800h4.200V14H4zM9.800 9.800H14V14H9.800z" fill="currentColor" stroke="none" />
          </svg>
        )}
        <MdVpnKey size={18} className="ml-[18px]" />
        <MdVisibilityOff size={18} className="ml-[18px]" />
      </div>
      <div className="h-[55px] border-t border-[#2b2c2f] bg-[#222] pl-[18px] text-[18px] leading-[54px] font-bold text-white">트랜잭션 정보</div>
      <div className="px-[23px]">
        <nav className="flex h-[39px] w-[820px] border-b border-[#ccc] text-[13.500px] leading-[37px] text-[#333]">
          {tabs.map((tab) => (
            <span
              key={tab}
              className={`h-[39px] px-[13.500px] whitespace-nowrap ${tab === "테이블 뷰" ? "border-b-2 border-[#2a6cf0] font-bold text-[#2a6cf0]" : ""}`}
            >
              {tab}
            </span>
          ))}
        </nav>
        <div className="flex h-[33px] w-[815px] items-end justify-between text-[15.800px] leading-[24px] text-[#222]">
          {t.path}
          <BarsIcon size={15} className="mb-[3px] text-[#999]" />
        </div>
        <div className="flex h-[33px] text-[14.600px] leading-[25px] whitespace-nowrap text-[#444]">
          {[
            ["시작", t.start],
            ["종료", t.end],
            ["경과", t.took],
            ["에이전트 명 (oname)", "demo-8100"],
          ].map(([k, v]) => (
            <span key={k} className="mr-[19px]">
              <span className="font-medium text-[#222]">{k} :</span>
              <span className="ml-[9px]">{v}</span>
            </span>
          ))}
        </div>
        <div className="h-[104px] w-[820px] bg-[#f4f4f4]">
          <Timeline t={t} />
          <div className="flex h-[46px] items-center pl-[17px] text-[13.500px] text-[#222]">
            <svg width="11" height="11" viewBox="0 0 11 11" fill="none" stroke="#777" strokeWidth="1.300">
              <path d="M1 3.500V1h2.500M5 1h1.500M8 1h2v2.500M10 5v1.500M10 8v2H8M3.500 10H1V8" />
            </svg>
            <span className="ml-[4px]">Method</span>
            {t.sql && (
              <>
                <span className="ml-[13px] h-[9px] w-[9px] bg-[#84d5d2]" />
                <span className="ml-[5px]">SQL</span>
              </>
            )}
            <span className={`h-[9px] w-[9px] bg-[#b69bff] ${t.sql ? "ml-[10px]" : "ml-[13px]"}`} />
            <span className="ml-[5px]">HTTP Call</span>
            <span className="ml-[16px] h-[9px] w-[9px] rounded-full bg-[#e03636]" />
            <span className="ml-[4px]">Active Stack</span>
          </div>
        </div>
        <div className="flex pt-[9px]">
          <button className={`${button} w-[100px] gap-[6px]`}>
            <ColumnsIcon w={15} />
            컬럼 선택
          </button>
          <button className={`${button} ml-[9px] w-[71px] gap-[8px]`}>
            <DownloadIcon size={13} />
            TXT
          </button>
          <button className={`${button} ml-[9px] w-[73px] gap-[8px]`}>
            <DownloadIcon size={13} />
            SQL
          </button>
          <button className={`${button} ml-[8px] w-[37px]`}>
            <ExpandIcon />
          </button>
        </div>
        <div className="mt-[9px] w-[809px] text-[13.500px] text-[#444]">
          <div className={`${stepGrid} h-[36px] border-t border-b border-[#999] text-[14px] leading-[33px] font-bold text-[#222]`}>
            <span className="border-r border-[#ddd] text-center">No</span>
            <span className="border-r border-[#ddd] text-center">시간</span>
            <span className="border-r border-[#ddd] text-center">갭</span>
            <span className="border-r border-[#ddd] text-center">경과</span>
            <span className="w-[311px] border-r border-[#ddd] text-center">내용</span>
          </div>
          {t.steps.map((s, i) => (
            <div key={i} className={`${stepGrid} items-center border-b border-[#ccc] pb-[2px] ${s.lines ? "h-[95.300px]" : i ? "h-[37.250px]" : "h-[36.500px]"}`}>
              <span className="text-center">{i + 1}</span>
              <span className="text-center">{s.time}</span>
              <span className="pr-[8px] text-right">{s.gap}</span>
              <span className="pr-[9px] text-right">{s.took}</span>
              <span className="pl-[10px]">
                <Content s={s} />
              </span>
            </div>
          ))}
        </div>
      </div>
      <div className={`absolute top-[390px] left-[835px] w-[7px] rounded-full bg-[#b0b0b0] ${t.thumb}`} />
      <div className="absolute top-[907px] left-[789px] flex h-[45px] w-[45px] items-center justify-center rounded-full border border-[#ccc] bg-white text-[#555]">
        <svg width="15" height="18" viewBox="0 0 15 18" fill="none" stroke="currentColor" strokeWidth="1.900">
          <path d="M.8 1.200h13.400M7.500 17.500V5.500M2 10.500l5.500-5.500 5.500 5.500" />
        </svg>
      </div>
      {t.grid && <div className="absolute top-0 right-0 h-full w-[38px] bg-gradient-to-r from-transparent via-black/5 to-black/20" />}
    </div>
  );
}

function Arrow() {
  return (
    <svg
      width="210"
      height="150"
      viewBox="620 860 210 150"
      className="absolute top-[860px] left-[620px] drop-shadow-[3px_5px_4px_rgba(0,0,0,0.45)]"
      fill="none"
      stroke="#000"
    >
      <path d="M624.700 1000L808 898" strokeWidth="15.500" />
      <path d="M740.500 877.500L810 898L790 967" strokeWidth="16" strokeLinecap="round" strokeLinejoin="round" />
    </svg>
  );
}

export default function App() {
  return (
    <div className="relative h-[1396px] w-[2576px] overflow-hidden bg-white [font-family:Roboto,'Noto_Sans_CJK_KR',sans-serif]">
      <div className="absolute top-[4px] left-[8px] h-[1376px] w-[2560px] bg-white shadow-[0_3px_8px_rgba(0,0,0,0.35)]" />
      <MainWindow />
      <Arrow />
      <Popup t={first} className="left-[818px]" />
      <Popup t={second} className="left-[1684.500px]" />
    </div>
  );
}
